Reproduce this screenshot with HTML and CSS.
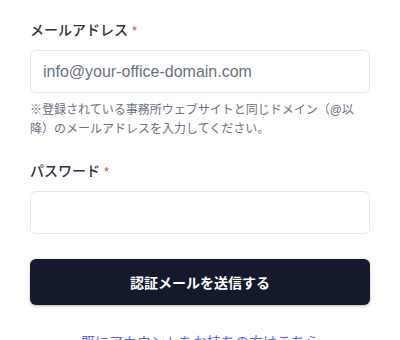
FILE: index.html
```html
<!DOCTYPE html>
<html lang="ja">
<head>
  <meta charset="UTF-8" />
  <title>ログイン – 認証メール送信</title>
  <link rel="stylesheet" href="styles.css">
</head>
<body>

<form id="authForm" class="auth-form">
  <div class="field">
    <label class="field-label" for="email">メールアドレス<span class="required">*</span></label>
    <input id="email" class="text-input" type="email" placeholder="info@your-office-domain.com" />
    <p class="hint">※登録されている事務所ウェブサイトと同じドメイン（@以降）のメールアドレスを入力してください。</p>
  </div>

  <div class="field">
    <label class="field-label" for="password">パスワード<span class="required">*</span></label>
    <input id="password" class="text-input" type="password" />
  </div>

  <button type="submit" class="submit-btn">認証メールを送信する</button>

  <p class="login-link"><a href="#">既にアカウントをお持ちの方はこちら</a></p>
</form>

</body>
</html>
```

FILE: styles.css
```css
:root {
  --text-main: #2b3340;
  --text-muted: #6b7280;
  --border: #e5e7eb;
  --required: #ef4444;
  --btn-bg: #141a2c;
  --link: #6366f1;
}

html, body {
  margin: 0;
  background: #fff;
  font-family: "Liberation Sans", "Noto Sans CJK JP", sans-serif;
  color: var(--text-main);
}

.auth-form {
  padding: 20px 30px 0;
}

.field {
  margin-bottom: 22px;
}

.field-label {
  display: block;
  font-size: 14px;
  line-height: 21px;
  font-weight: 500;
  margin-bottom: 9px;
}

.required {
  color: var(--required);
  margin-left: 4px;
  font-size: 13px;
}

.text-input {
  display: block;
  width: 100%;
  height: 43px;
  box-sizing: border-box;
  padding: 0 12px;
  border: 1px solid var(--border);
  border-radius: 6px;
  font-family: inherit;
  font-size: 16px;
  color: var(--text-main);
  background: #fff;
  outline: none;
}

.text-input::placeholder {
  color: var(--text-muted);
}

.hint {
  margin: 8px 0 0;
  font-size: 12px;
  line-height: 19px;
  color: var(--text-muted);
}

.submit-btn {
  display: block;
  width: 100%;
  height: 46px;
  margin-top: 25px;
  border: none;
  border-radius: 6px;
  background: var(--btn-bg);
  color: #fff;
  font-family: inherit;
  font-size: 14px;
  font-weight: 700;
  cursor: pointer;
  box-shadow: 0 1px 3px rgba(0,0,0,0.3);
}

.login-link {
  margin: 27px 0 0;
  text-align: center;
  font-size: 14px;
  line-height: 20px;
}

.login-link a {
  color: var(--link);
  text-decoration: none;
}
```
